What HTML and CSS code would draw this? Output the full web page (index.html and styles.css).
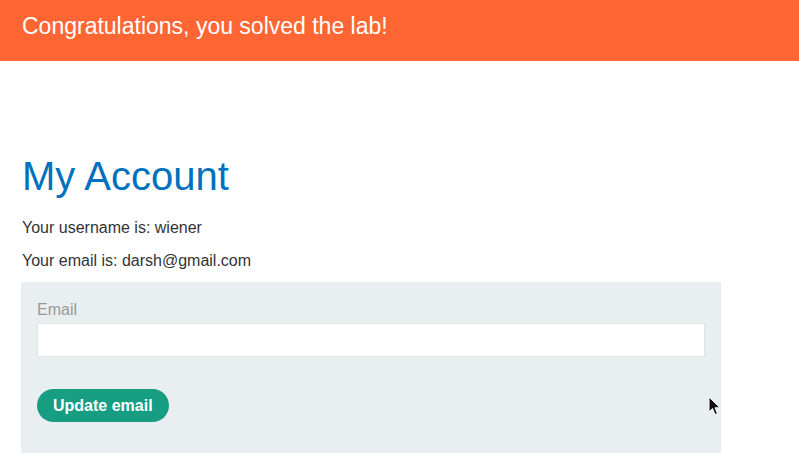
FILE: index.html
```html
<!DOCTYPE html>
<html>
<head>
<meta charset="utf-8">
<link rel="stylesheet" href="styles.css">
</head>
<body>
<header class="banner">Congratulations, you solved the lab!</header>
<main class="container">
  <h1 class="title">My Account</h1>
  <p class="info">Your username is: wiener</p>
  <p class="info">Your email is: darsh@gmail.com</p>
  <form class="email-form">
    <label class="label">Email</label>
    <input class="input" type="email">
    <button class="btn" type="button">Update email</button>
  </form>
</main>
<svg class="cursor" width="14" height="20" viewBox="0 0 14 20">
  <path d="M1 1 L1 16 L4.5 12.5 L7 18.5 L9.5 17.5 L7 11.8 L12 11.8 Z" fill="#111" stroke="#fff" stroke-width="1"/>
</svg>
</body>
</html>
```
FILE: styles.css
```css
html, body {
  margin: 0;
  padding: 0;
  background: #fff;
  font-family: "Liberation Sans", Arial, sans-serif;
  color: #333;
}
body { position: relative; }
.banner {
  box-sizing: border-box;
  height: 61px;
  background: #ff6633;
  color: #fff;
  font-size: 23px;
  line-height: 26px;
  padding: 13px 0 0 22px;
}
.container {
  padding: 0 78px 0 21px;
}
.title {
  margin: 91px 0 18px 1px;
  font-size: 40px;
  line-height: 48px;
  font-weight: normal;
  color: #0071bc;
}
.info {
  margin: 0 0 13px 1px;
  font-size: 16px;
  line-height: 20px;
}
.info + .info { margin-bottom: 11px; }
.email-form {
  display: flex;
  flex-direction: column;
  align-items: flex-start;
  background: #e9eef1;
  padding: 18px 16px 31px;
  width: 668px;
  margin: 0;
}
.label {
  font-size: 16px;
  line-height: 20px;
  color: #999;
  margin-bottom: 3px;
}
.input {
  box-sizing: border-box;
  width: 100%;
  height: 34px;
  margin: 0;
  border: 1px solid #e2e2e2;
  background: #fff;
  outline: none;
}
.btn {
  margin-top: 32px;
  height: 33px;
  padding: 0 16px;
  border: none;
  border-radius: 17px;
  background: #179d82;
  color: #fff;
  font-family: "Liberation Sans", Arial, sans-serif;
  font-weight: bold;
  font-size: 16px;
}
.cursor {
  position: absolute;
  left: 708px;
  top: 396px;
}
```
